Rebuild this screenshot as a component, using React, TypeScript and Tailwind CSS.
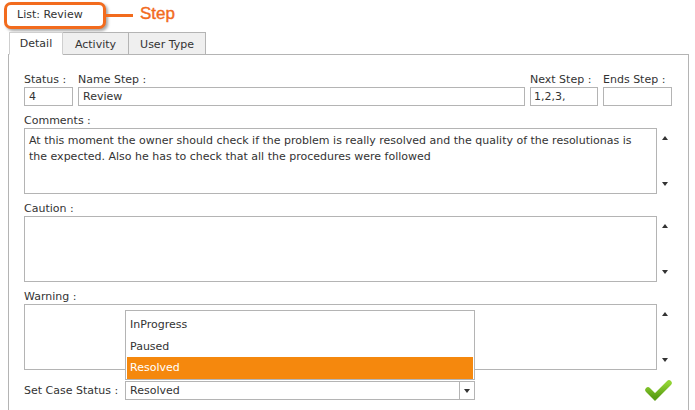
import React from "react";

function ArrowUp() {
  return (
    <svg width="6" height="4" viewBox="0 0 6 4" className="block">
      <polygon points="0,4 6,4 3,0" fill="#333" />
    </svg>
  );
}
function ArrowDown() {
  return (
    <svg width="6" height="4" viewBox="0 0 6 4" className="block">
      <polygon points="0,0 6,0 3,4" fill="#333" />
    </svg>
  );
}

function TextArea({ label, text }: { label: string; text?: string }) {
  return (
    <div className="flex flex-col">
      <div className="h-[15px] leading-[15px]">{label}</div>
      <div className="flex">
        <div className="w-[633px] h-[66px] border border-[#b4b4b4] pl-[4px] pt-[4px] leading-[16px] whitespace-pre-line">
          {text}
        </div>
        <div className="flex flex-col justify-between items-center w-[14px] pt-[8px] pb-[8px] ml-[1px]">
          <ArrowUp />
          <ArrowDown />
        </div>
      </div>
    </div>
  );
}

export default function App() {
  return (
    <div className="w-[695px] h-[410px] overflow-hidden bg-white text-[#333] text-[11px] font-['DejaVu_Sans',sans-serif]">
      {/* header */}
      <div className="h-[32px] flex items-start pl-[4px] pt-[2px]">
        <div className="w-[102px] h-[27px] border-[3px] border-[#f26b1d] rounded-[7px] shadow-[2px_2px_3px_rgba(0,0,0,0.35)] flex items-center pl-[10px] bg-white">
          List: Review
        </div>
        <div className="w-[27px] h-[3px] bg-[#f26b1d] mt-[12px]" />
        <div className="ml-[7px] mt-[2px] text-[17px] leading-[20px] text-[#f26b1d] font-['Liberation_Sans',sans-serif] [-webkit-text-stroke:0.4px_#f26b1d]">
          Step
        </div>
      </div>

      {/* tabs */}
      <div className="flex ml-[9px] h-[23px] relative z-10 -mb-px">
        <div className="w-[54px] h-[23px] bg-white border border-[#cfcfcf] border-b-white flex items-center justify-center pt-[2px]">
          Detail
        </div>
        <div className="w-[66px] h-[23px] bg-[#efefef] border border-[#b4b4b4] border-l-0 flex items-center justify-center pt-[3px]">
          Activity
        </div>
        <div className="w-[77px] h-[23px] bg-[#efefef] border border-[#b4b4b4] border-l-0 flex items-center justify-center pt-[3px]">
          User Type
        </div>
      </div>

      {/* panel */}
      <div className="ml-[8px] w-[681px] h-[400px] border border-[#b4b4b4] pl-[15px] pt-[17px]">
        {/* row 1 */}
        <div className="flex gap-[5px]">
          <div className="flex flex-col w-[49px]">
            <div className="h-[15px] leading-[15px]">Status :</div>
            <div className="h-[19px] border border-[#b4b4b4] pl-[4px] leading-[17px]">4</div>
          </div>
          <div className="flex flex-col w-[447px]">
            <div className="h-[15px] leading-[15px]">Name Step :</div>
            <div className="h-[19px] border border-[#b4b4b4] pl-[4px] leading-[17px]">Review</div>
          </div>
          <div className="flex flex-col w-[68px]">
            <div className="h-[15px] leading-[15px]">Next Step :</div>
            <div className="h-[19px] border border-[#b4b4b4] pl-[3px] leading-[17px]">1,2,3,</div>
          </div>
          <div className="flex flex-col w-[69px]">
            <div className="h-[15px] leading-[15px] whitespace-nowrap">Ends Step :</div>
            <div className="h-[19px] border border-[#b4b4b4]" />
          </div>
        </div>

        <div className="flex flex-col gap-[7px] mt-[7px]">
          <TextArea
            label="Comments :"
            text={
              "At this moment the owner should check if the problem is really resolved and the quality of the resolutionas is\nthe expected. Also he has to check that all the procedures were followed"
            }
          />
          <TextArea label="Caution :" />
          <TextArea label="Warning :" />
        </div>

        {/* status row */}
        <div className="flex items-center mt-[10px]">
          <div className="w-[101px] whitespace-nowrap pt-px">Set Case Status :</div>
          <div className="relative">
            <div className="absolute left-0 bottom-[calc(100%+1px)] w-[350px] h-[70px] border border-[#b4b4b4] bg-white p-px pt-[2px] flex flex-col">
              <div className="h-[22px] leading-[22px] pl-[3px] pt-px">InProgress</div>
              <div className="h-[22px] leading-[22px] pl-[3px] pt-px">Paused</div>
              <div className="h-[22px] leading-[22px] pl-[3px] bg-[#f5880d] text-white">Resolved</div>
            </div>
            <div className="w-[350px] h-[19px] border border-[#b4b4b4] flex">
              <div className="flex-1 pl-[4px] leading-[17px]">Resolved</div>
              <div className="w-[15px] border-l border-[#b4b4b4] flex items-center justify-center">
                <ArrowDown />
              </div>
            </div>
          </div>
          <div className="ml-[170px] -mt-[2px]">
            <svg width="27" height="23" viewBox="0 0 27 23">
              <defs>
                <linearGradient id="g" x1="0" y1="0" x2="0" y2="1">
                  <stop offset="0" stopColor="#92d434" />
                  <stop offset="1" stopColor="#5a9e14" />
                </linearGradient>
              </defs>
              <polyline
                points="3,12 10,19 24,5"
                fill="none"
                stroke="url(#g)"
                strokeWidth="5.5"
                strokeLinecap="round"
                strokeLinejoin="miter"
              />
            </svg>
          </div>
        </div>
      </div>
    </div>
  );
}
